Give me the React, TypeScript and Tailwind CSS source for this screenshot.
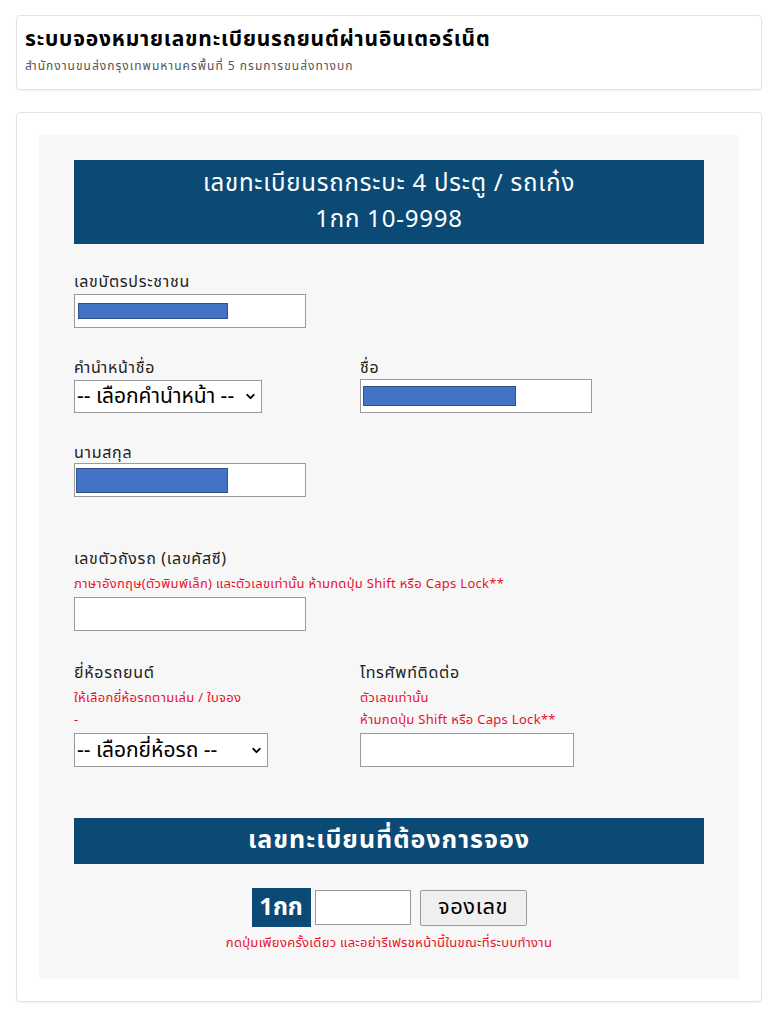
import { ChevronDown } from "lucide-react";

const thai = { fontFamily: "Tahoma, 'Noto Sans Thai', 'Noto Sans', 'DejaVu Sans', sans-serif" };

function Redacted({ className }: { className: string }) {
  return <div className={`border border-[#2f528f] bg-[#4472c4] ${className}`} />;
}

function TextBox({
  className,
  children,
}: {
  className: string;
  children?: React.ReactNode;
}) {
  return (
    <div className={`flex items-center border border-[#9a9a9a] bg-white ${className}`}>
      {children}
    </div>
  );
}

function FakeSelect({ label, className }: { label: string; className: string }) {
  return (
    <div
      className={`flex items-center justify-between border border-[#9a9a9a] bg-white pl-[2px] pr-[4px] text-[21px] leading-none text-black ${className}`}
    >
      <span className="whitespace-nowrap">{label}</span>
      <ChevronDown className="h-[13px] w-[13px] shrink-0" strokeWidth={3.5} />
    </div>
  );
}

function Label({ children }: { children: React.ReactNode }) {
  return (
    <p className="h-[20px] whitespace-nowrap text-[16px] leading-[20px] tracking-[0.7px] text-[#222]">
      {children}
    </p>
  );
}

function Hint({ children }: { children: React.ReactNode }) {
  return (
    <p className="h-[22px] whitespace-nowrap text-[13px] leading-[22px] tracking-[0.3px] text-[#e8112d]">
      {children}
    </p>
  );
}

export default function App() {
  return (
    <div className="min-h-[1023px] bg-white pl-4 pr-5 pt-[15px]" style={thai}>
      <div className="h-[75px] rounded-[4px] border border-[#e2e2e2] px-2 pt-[11px] shadow-[0_1px_2px_rgba(0,0,0,0.05)]">
        <h1 className="whitespace-nowrap text-[21px] font-bold leading-[26px] tracking-[0.8px] text-black">
          ระบบจองหมายเลขทะเบียนรถยนต์ผ่านอินเตอร์เน็ต
        </h1>
        <p className="mt-[5px] whitespace-nowrap text-[12px] leading-[16px] tracking-[1px] text-[#555]">
          สำนักงานขนส่งกรุงเทพมหานครพื้นที่ 5 กรมการขนส่งทางบก
        </p>
      </div>

      <div className="mt-[22px] h-[890px] rounded-[4px] border border-[#e2e2e2] p-[22px] shadow-[0_1px_2px_rgba(0,0,0,0.05)]">
        <div className="h-[844px] bg-[#f7f7f7] px-[35px] pt-[25px]">
          <div className="flex h-[84px] flex-col items-center justify-center bg-[#0c4a76] text-[24px] leading-[36px] tracking-[0.8px] text-white">
            <span>เลขทะเบียนรถกระบะ 4 ประตู / รถเก๋ง</span>
            <span>1กก 10-9998</span>
          </div>

          <div className="mt-[28px]">
            <Label>เลขบัตรประชาชน</Label>
            <TextBox className="mt-[2px] h-[34px] w-[232px] pl-[3px]">
              <Redacted className="h-[16px] w-[150px]" />
            </TextBox>
          </div>

          <div className="mt-[30px] flex">
            <div className="w-[286px]">
              <Label>คำนำหน้าชื่อ</Label>
              <FakeSelect label="-- เลือกคำนำหน้า --" className="mt-[2px] h-[33px] w-[188px]" />
            </div>
            <div>
              <Label>ชื่อ</Label>
              <TextBox className="mt-[1px] h-[34px] w-[232px] pl-[2px]">
                <Redacted className="h-[20px] w-[153px]" />
              </TextBox>
            </div>
          </div>

          <div className="mt-[30px]">
            <Label>นามสกุล</Label>
            <TextBox className="h-[34px] w-[232px] pl-[1px]">
              <Redacted className="h-[25px] w-[152px]" />
            </TextBox>
          </div>

          <div className="mt-[52px]">
            <Label>เลขตัวถังรถ (เลขคัสซี)</Label>
            <p className="mt-[6px] h-[18px] whitespace-nowrap text-[13px] leading-[18px] tracking-[0.3px] text-[#e8112d]">
              ภาษาอังกฤษ(ตัวพิมพ์เล็ก) และตัวเลขเท่านั้น ห้ามกดปุ่ม Shift หรือ Caps Lock**
            </p>
            <TextBox className="mt-[4px] h-[34px] w-[232px]" />
          </div>

          <div className="mt-[32px] flex">
            <div className="w-[286px]">
              <Label>ยี่ห้อรถยนต์</Label>
              <div className="mt-[4px]">
                <Hint>ให้เลือกยี่ห้อรถตามเล่ม / ใบจอง</Hint>
                <Hint>-</Hint>
              </div>
              <FakeSelect label="-- เลือกยี่ห้อรถ --" className="mt-[2px] h-[34px] w-[194px]" />
            </div>
            <div>
              <Label>โทรศัพท์ติดต่อ</Label>
              <div className="mt-[4px]">
                <Hint>ตัวเลขเท่านั้น</Hint>
                <Hint>ห้ามกดปุ่ม Shift หรือ Caps Lock**</Hint>
              </div>
              <TextBox className="mt-[2px] h-[34px] w-[214px]" />
            </div>
          </div>

          <div className="mt-[51px] flex h-[46px] items-center justify-center bg-[#0c4a76] text-[25px] font-bold tracking-[1px] text-white">
            เลขทะเบียนที่ต้องการจอง
          </div>

          <div className="mt-[24px] flex items-center justify-center">
            <div className="flex h-[39px] w-[59px] items-center justify-center bg-[#0c4a76] text-[24px] font-bold text-white">
              1กก
            </div>
            <TextBox className="ml-[4px] h-[35px] w-[96px]" />
            <button
              type="button"
              className="ml-[9px] h-[36px] w-[107px] rounded-[2px] border border-[#9a9a9a] bg-[#efefef] text-[22px] leading-none tracking-[0.5px] text-black"
            >
              จองเลข
            </button>
          </div>
          <p className="mt-[9px] whitespace-nowrap text-center text-[13px] leading-[14px] tracking-[0.3px] text-[#e8112d]">
            กดปุ่มเพียงครั้งเดียว และอย่ารีเฟรชหน้านี้ในขณะที่ระบบทำงาน
          </p>
        </div>
      </div>
    </div>
  );
}
